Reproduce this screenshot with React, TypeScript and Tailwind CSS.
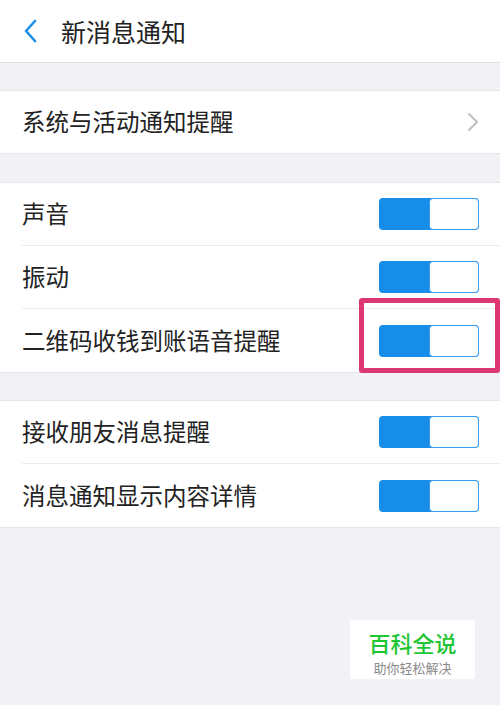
const FONT = { fontFamily: '"Noto Sans CJK SC", "Noto Sans", sans-serif' };

const GROUPS = [
  ["声音", "振动", "二维码收钱到账语音提醒"],
  ["接收朋友消息提醒", "消息通知显示内容详情"],
];

function Toggle() {
  return (
    <div className="flex h-[32px] w-[100px] overflow-hidden rounded-[4px] bg-[#168de9]">
      <div className="w-[50px]" />
      <div className="w-[50px] rounded-[4px] border-[1.5px] border-[#3a9cf0] bg-white" />
    </div>
  );
}

function Row({ label, last, children }: { label: string; last?: boolean; children: React.ReactNode }) {
  return (
    <div className="flex h-[63px] items-stretch pl-[22px]">
      <div className={"flex flex-1 items-center justify-between pr-[21px] " + (last ? "" : "border-b border-[#ececf0]")}>
        <span className="text-[23.5px] leading-none text-[#222]">{label}</span>
        {children}
      </div>
    </div>
  );
}

export default function App() {
  return (
    <div style={FONT} className="relative min-h-[705px] w-[500px] bg-[#f2f2f6]">
      <header className="flex h-[63px] items-center border-b border-[#dedee2] bg-white">
        <svg width="16" height="24" viewBox="0 0 16 24" className="ml-[22px]">
          <path d="M13 2 L4 12 L13 22" fill="none" stroke="#1a8fe8" strokeWidth="2.6" strokeLinecap="round" strokeLinejoin="round" />
        </svg>
        <h1 className="ml-[23px] text-[25px] font-normal leading-none text-[#222]">新消息通知</h1>
      </header>

      <div className="mt-[27px] border-y border-[#e6e6ea] bg-white">
        <div className="flex h-[62px] items-center justify-between pl-[22px] pr-[21px]">
          <span className="text-[23.5px] leading-none text-[#222]">系统与活动通知提醒</span>
          <svg width="12" height="20" viewBox="0 0 12 20">
            <path d="M2 2 L10 10 L2 18" fill="none" stroke="#c2c2c6" strokeWidth="2.2" strokeLinecap="round" strokeLinejoin="round" />
          </svg>
        </div>
      </div>

      {GROUPS.map((group, gi) => (
        <div key={gi} className={"border-y border-[#e6e6ea] bg-white " + (gi === 0 ? "mt-[28px]" : "mt-[27px]")}>
          {group.map((label, i) => (
            <Row key={label} label={label} last={i === group.length - 1}>
              <Toggle />
            </Row>
          ))}
        </div>
      ))}

      {/* highlight box */}
      <div className="absolute left-[359px] top-[298px] h-[75px] w-[141px] rounded-[3px] border-[5px] border-[#dc3673]" />

      {/* watermark */}
      <div className="absolute left-[350px] top-[620px] flex h-[59px] w-[125px] flex-col items-center justify-center bg-white pt-[4px]">
        <span className="text-[22px] font-medium leading-[32px] text-[#1ec534]">百科全说</span>
        <span className="text-[13px] leading-[19px] text-[#8a8a8a]">助你轻松解决</span>
      </div>
    </div>
  );
}
